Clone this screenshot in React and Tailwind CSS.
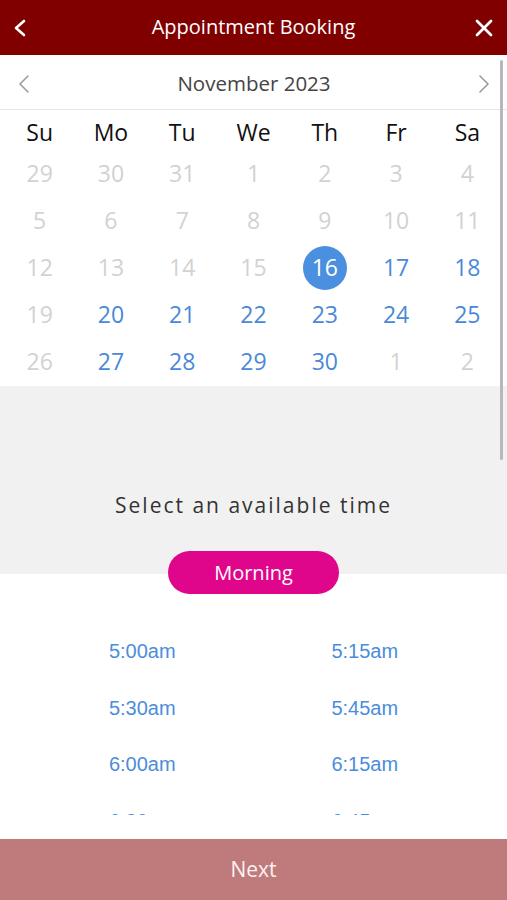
const sans = "font-['Open_Sans','Noto_Sans',sans-serif]"

const weeks = [
  [[29, 0], [30, 0], [31, 0], [1, 0], [2, 0], [3, 0], [4, 0]],
  [[5, 0], [6, 0], [7, 0], [8, 0], [9, 0], [10, 0], [11, 0]],
  [[12, 0], [13, 0], [14, 0], [15, 0], [16, 2], [17, 1], [18, 1]],
  [[19, 0], [20, 1], [21, 1], [22, 1], [23, 1], [24, 1], [25, 1]],
  [[26, 0], [27, 1], [28, 1], [29, 1], [30, 1], [1, 0], [2, 0]],
]

const days = ["Su", "Mo", "Tu", "We", "Th", "Fr", "Sa"]

const times = [
  ["5:00am", "5:15am"],
  ["5:30am", "5:45am"],
  ["6:00am", "6:15am"],
  ["6:30am", "6:45am"],
]

function DayCell({ day, state }) {
  if (state === 2) {
    return (
      <div className="flex items-center justify-center">
        <span className="flex h-[44px] w-[44px] items-center justify-center rounded-full bg-[#4a8fe0] text-white">{day}</span>
      </div>
    )
  }
  return (
    <div className={`flex items-center justify-center ${state ? "text-[#4a89d8]" : "text-[#d2d2d2]"}`}>{day}</div>
  )
}

export default function App() {
  return (
    <div className={`flex h-[900px] w-[507px] flex-col overflow-hidden bg-white ${sans}`}>
      <header className="flex h-[55px] shrink-0 items-center justify-between bg-[#800000] px-[13px] text-white">
        <div className="flex w-[22px] justify-start">
          <svg width="14" height="20" viewBox="0 0 14 20" fill="none" stroke="white" strokeWidth="2.6" strokeLinecap="round" strokeLinejoin="round">
            <polyline points="11,3 3,10 11,17" />
          </svg>
        </div>
        <h1 className="pb-px text-[20px] leading-none">Appointment Booking</h1>
        <div className="flex w-[22px] justify-end">
          <svg width="20" height="20" viewBox="0 0 20 20" fill="none" stroke="white" strokeWidth="2.8" strokeLinecap="round">
            <line x1="3" y1="3" x2="17" y2="17" />
            <line x1="17" y1="3" x2="3" y2="17" />
          </svg>
        </div>
      </header>

      <div className="relative h-[760px] shrink-0 overflow-hidden">
        <div className="flex h-[55px] items-center justify-between border-b border-[#e6e6e6] pl-[18px] pr-[17px] pt-[3px]">
          <svg width="12" height="20" viewBox="0 0 12 20" fill="none" stroke="#9a9a9a" strokeWidth="1.6" strokeLinecap="round" strokeLinejoin="round">
            <polyline points="10,2 2,10 10,18" />
          </svg>
          <span className="text-[20.5px] text-[#444]">November 2023</span>
          <svg width="12" height="20" viewBox="0 0 12 20" fill="none" stroke="#9a9a9a" strokeWidth="1.6" strokeLinecap="round" strokeLinejoin="round">
            <polyline points="2,2 10,10 2,18" />
          </svg>
        </div>

        <div className="grid h-[40px] grid-cols-7 px-1 pt-[4px] text-[23px] text-[#111]">
          {days.map(d => (
            <div key={d} className="flex items-center justify-center">{d}</div>
          ))}
        </div>
        <div className="px-1 pb-px text-[23px]">
          {weeks.map((w, i) => (
            <div key={i} className="grid h-[47px] grid-cols-7">
              {w.map(([d, s], j) => <DayCell key={j} day={d} state={s} />)}
            </div>
          ))}
        </div>

        <div className="h-[188px] bg-[#f1f1f1] pt-[104px] text-center">
          <p className="text-[21px] leading-[30px] tracking-[2px] text-[#333]">Select an available time</p>
        </div>
        <div className="relative -mt-[23px] flex justify-center">
          <button className="flex h-[43px] w-[171px] items-center justify-center rounded-full bg-[#df068b] text-[20px] text-white">
            Morning
          </button>
        </div>

        <div className="mt-[29px] px-[31px] font-['Liberation_Sans',Arial,sans-serif] text-[20px] text-[#4b8ddb]">
          {times.map((row, i) => (
            <div key={i} className="grid h-[56.5px] grid-cols-2">
              {row.map(t => (
                <div key={t} className="flex items-center justify-center">{t}</div>
              ))}
            </div>
          ))}
        </div>

        <div className="absolute right-[4px] top-[5px] h-[400px] w-[3px] rounded-full bg-[#b8b8b8]" />
      </div>

      <div className="h-[24px] shrink-0" />
      <button className="flex h-[61px] shrink-0 items-center justify-center bg-[#bf7b7b] text-[21px] text-[#fdf1f1]">
        Next
      </button>
    </div>
  )
}
